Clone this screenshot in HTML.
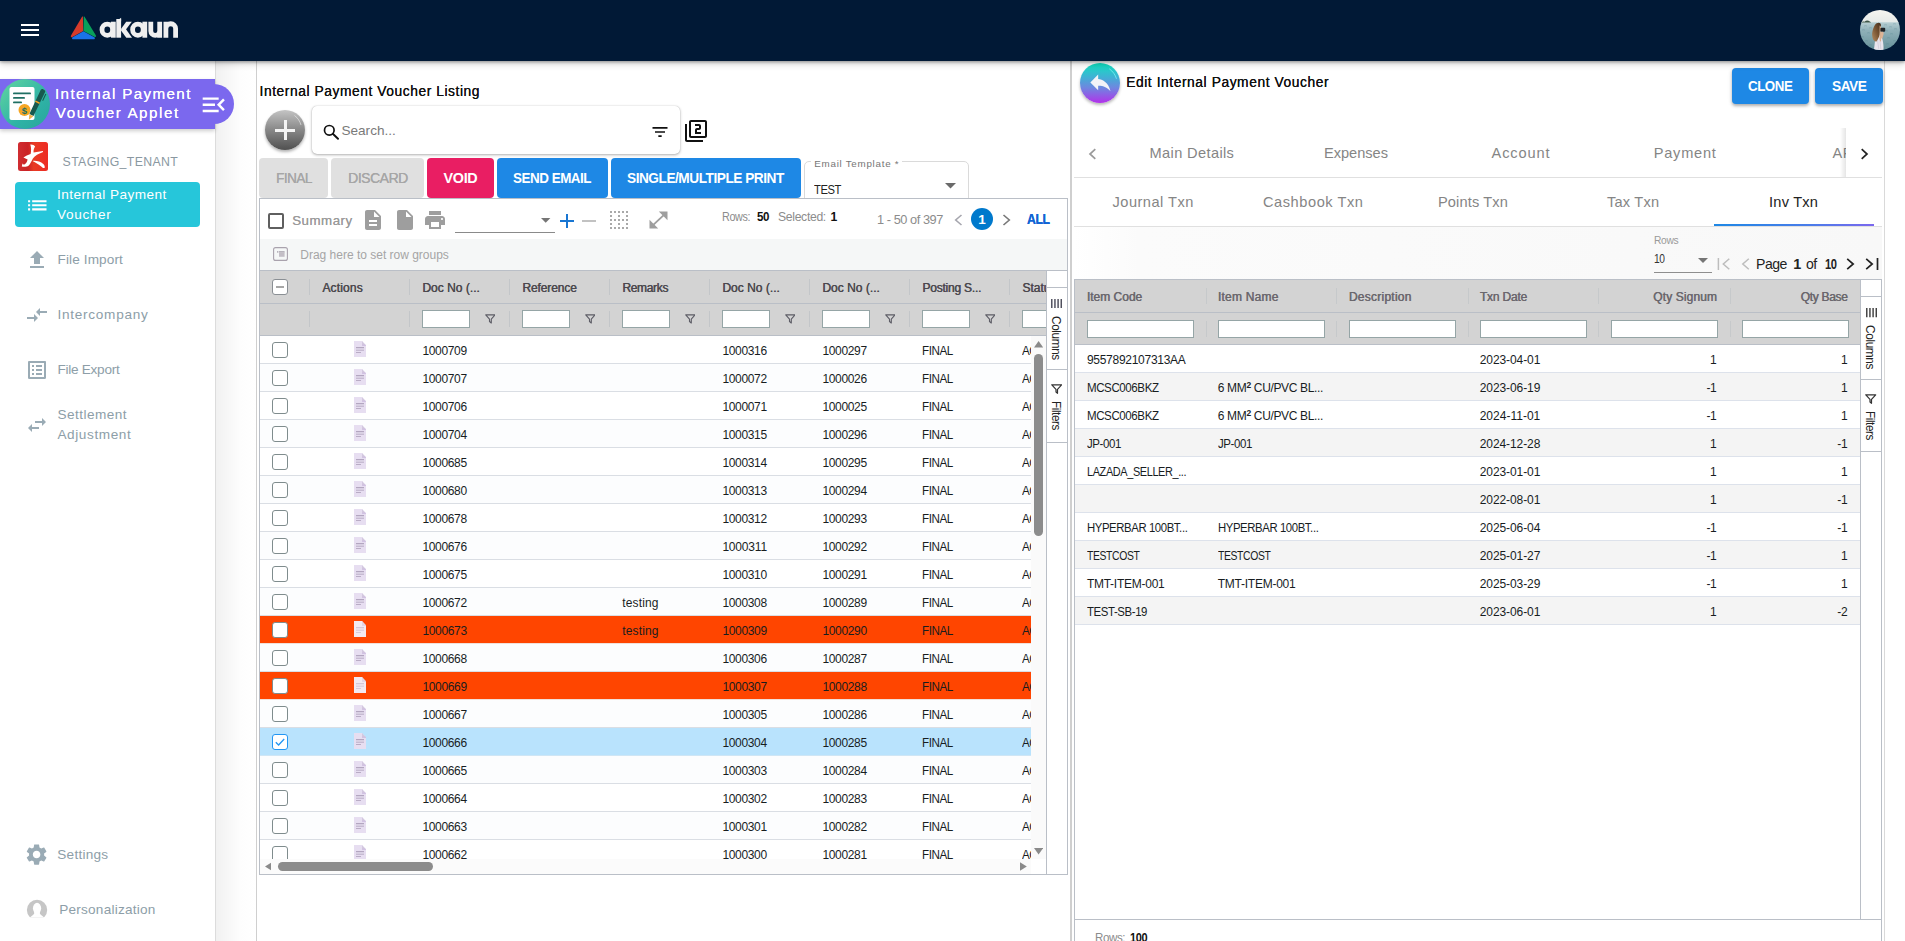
<!DOCTYPE html>
<html><head><meta charset="utf-8"><title>Internal Payment Voucher</title>
<style>
html,body{margin:0;padding:0}
body{width:1905px;height:941px;overflow:hidden;background:#fff;position:relative;font-family:"Liberation Sans",sans-serif;}
.b{position:absolute;display:block}
.t{position:absolute;white-space:nowrap;line-height:1;font-family:"Liberation Sans",sans-serif;}
</style></head>
<body>
<div class="b" style="left:216px;top:61px;width:40px;height:880px;background:linear-gradient(to right,#f1f1f1,#fdfdfd 60%,#fff);"></div>
<div class="b" style="left:215px;top:61px;width:1px;height:880px;background:#dcdcdc;"></div>
<div class="b" style="left:256px;top:61px;width:1px;height:880px;background:#cfcfcf;"></div>
<div class="b" style="left:0px;top:79px;width:215px;height:50px;background:#7b68ee;box-shadow:0 2px 4px rgba(0,0,0,.2);"></div>
<div class="b" style="left:194px;top:84px;width:40px;height:40px;background:#7b68ee;border-radius:50%;"></div>
<div class="b" style="left:0px;top:79px;width:215px;height:50px;background:#7b68ee;"></div>
<div class="b" style="left:0px;top:79px;width:50px;height:50px;background:linear-gradient(135deg,#63d6a0,#2fb3a6 60%,#27a59c);border-radius:50%;"></div>
<svg class="b" style="left:0px;top:79px;" width="50" height="50" viewBox="0 0 50 50">
      <rect x="9.5" y="8" width="25" height="33" rx="2" fill="#fff"/>
      <rect x="13" y="13.5" width="18" height="1.8" rx=".9" fill="#1f6f63"/>
      <rect x="13" y="18" width="12" height="1.8" rx=".9" fill="#1f6f63"/>
      <rect x="13" y="22.5" width="9" height="1.8" rx=".9" fill="#1f6f63"/>
      <circle cx="24.5" cy="31" r="6" fill="#f5a623"/>
      <text x="24.5" y="34.6" font-family="Liberation Sans" font-weight="700" font-size="9.5" text-anchor="middle" fill="#1f6f63">$</text>
      <path d="M40.800 10.800c.600-.800 1.500-.900 2.300-.500l1.200.600c.900.500 1.100 1.300.800 2.200L33.500 37l-4.100-2z" fill="#17594f"/>
      <path d="M45.300 14.800l1 .5-3.200 6.700-.9-.5z" fill="#17594f"/>
      <path d="M29.300 35.200l4.100 2-4.500 3.500z" fill="#f0b24a"/>
      <path d="M35.600 21.500l4.300 2.100-.6 1.300-4.300-2.100z" fill="#f5a623"/>
    </svg>
<div class="t" style="left:55.00px;top:86.00px;font-size:15.2px;color:#fff;letter-spacing:1.373px;text-shadow:0 0 .4px #fff;">Internal Payment</div>
<div class="t" style="left:55.80px;top:105.00px;font-size:15.2px;color:#fff;letter-spacing:1.562px;text-shadow:0 0 .4px #fff;">Voucher Applet</div>
<svg class="b" style="left:199px;top:89.5px;" width="29.5" height="29.5" viewBox="0 0 24 24"><path fill="#fff" d="M3 18h13v-2H3v2zm0-5h10v-2H3v2zm0-7v2h13V6H3zm18 9.59L17.42 12 21 8.41 19.59 7l-5 5 5 5L21 15.590z"/></svg>
<div class="b" style="left:18px;top:142.25px;width:30px;height:29px;background:linear-gradient(to right,#d02d31 0%,#ca2226 33%,#e73b25 52%,#ee2b23 100%);border-radius:2.500px;"></div>
<svg class="b" style="left:18px;top:142.25px;" width="30" height="29" viewBox="0 0 30 29"><path fill="#fff" d="M12.300 2.600C14 2.200 16.400 3.200 17.100 4.600C15.900 6.500 15.300 8.500 15.600 10.600L24.800 8.900C25.300 9.100 25.100 9.900 24.600 10.300C20.500 11.800 17 13.500 14.900 16.600C13.500 19 12.500 22 10.500 23.800C8.800 24.900 6 24.900 3.800 24.500L4.500 21.500L5.900 22.800C7.600 22.300 9 20.500 9.600 17.600L5.400 15.500C7.500 14 10 13.300 12.600 12.100C13.200 9.500 13.400 6 12.300 2.600Z"/>
      <path fill="#fff" d="M14.600 18.900C18 18.400 22.600 19.500 25.300 22C26.700 23.400 27.100 25 26.500 26.100L25 25.900C22.500 23.500 19 21 14.600 18.900Z"/></svg>
<div class="t" style="left:62.60px;top:156.00px;font-size:12.3px;color:#8a98a1;letter-spacing:0.365px;">STAGING_TENANT</div>
<div class="b" style="left:15px;top:182px;width:185px;height:45px;background:#26c6da;border-radius:4px;"></div>
<svg class="b" style="left:25px;top:193px;" width="24.6" height="24.6" viewBox="0 0 24 24"><path fill="#fff" d="M3 13h2v-2H3v2zm0 4h2v-2H3v2zm0-8h2V7H3v2zm4 4h14v-2H7v2zm0 4h14v-2H7v2zM7 7v2h14V7H7z"/></svg>
<div class="t" style="left:57.00px;top:188.00px;font-size:13.6px;color:#fff;letter-spacing:0.432px;">Internal Payment</div>
<div class="t" style="left:57.00px;top:208.00px;font-size:13.6px;color:#fff;letter-spacing:0.648px;">Voucher</div>
<svg class="b" style="left:25px;top:248px;" width="24" height="24" viewBox="0 0 24 24"><path fill="#9aabb5" d="M9 16h6v-6h4l-7-7-7 7h4zm-4 2h14v2H5z"/></svg>
<div class="t" style="left:57.50px;top:253.00px;font-size:13.6px;color:#8d9ea8;letter-spacing:0.117px;">File Import</div>
<svg class="b" style="left:25px;top:303.4px;" width="24" height="24" viewBox="0 0 24 24"><path fill="#9aabb5" d="M9.01 14H2v2h7.010v3L13 15l-3.990-4v3zm5.980-1v-3H22V8h-7.010V5L11 9l3.990 4z"/></svg>
<div class="t" style="left:57.40px;top:308.00px;font-size:13.6px;color:#8d9ea8;letter-spacing:0.735px;">Intercompany</div>
<svg class="b" style="left:25px;top:358px;" width="24" height="24" viewBox="0 0 24 24"><path fill="#9aabb5" d="M19 5v14H5V5h14m1.100-2H3.900c-.5 0-.9.4-.9.9v16.200c0 .4.400.9.900.9h16.200c.4 0 .9-.5.9-.9V3.900c0-.5-.5-.9-.9-.9zM11 7h6v2h-6V7zm0 4h6v2h-6v-2zm0 4h6v2h-6zM7 7h2v2H7zm0 4h2v2H7zm0 4h2v2H7z"/></svg>
<div class="t" style="left:57.40px;top:363.00px;font-size:13.6px;color:#8d9ea8;letter-spacing:-0.261px;">File Export</div>
<svg class="b" style="left:25px;top:413.3px;" width="24" height="24" viewBox="0 0 24 24"><path fill="#9aabb5" d="M6.990 11L3 15l3.990 4v-3H14v-2H6.990v-3zM21 9l-3.990-4v3H10v2h7.010v3L21 9z"/></svg>
<div class="t" style="left:57.40px;top:408.00px;font-size:13.6px;color:#8d9ea8;letter-spacing:0.466px;">Settlement</div>
<div class="t" style="left:57.40px;top:428.00px;font-size:13.6px;color:#8d9ea8;letter-spacing:0.600px;">Adjustment</div>
<svg class="b" style="left:24.4px;top:842.3px;" width="25.2" height="25.2" viewBox="0 0 24 24"><path fill="#9aabb5" d="M19.140 12.940c.040-.3.060-.61.060-.940 0-.320-.020-.640-.070-.940l2.030-1.580c.180-.140.230-.410.120-.610l-1.920-3.320c-.120-.220-.370-.290-.590-.220l-2.390.960c-.5-.380-1.030-.7-1.620-.940l-.360-2.540c-.040-.240-.240-.410-.480-.410h-3.840c-.240 0-.430.170-.470.410l-.360 2.540c-.590.240-1.130.570-1.620.940l-2.390-.960c-.220-.080-.470 0-.590.220L2.740 8.870c-.120.210-.080.470.120.610l2.030 1.580c-.050.3-.090.630-.090.940s.020.640.070.940l-2.030 1.580c-.180.140-.230.410-.120.610l1.920 3.320c.120.220.370.290.590.220l2.390-.960c.5.380 1.030.7 1.620.940l.360 2.540c.050.240.240.410.480.410h3.840c.240 0 .440-.170.470-.410l.360-2.540c.590-.240 1.130-.560 1.620-.940l2.390.960c.220.080.470 0 .590-.220l1.920-3.320c.120-.220.070-.470-.120-.610l-2.010-1.580zM12 15.600c-1.980 0-3.600-1.620-3.600-3.600s1.620-3.600 3.600-3.600 3.600 1.620 3.600 3.600-1.620 3.600-3.600 3.600z"/></svg>
<div class="t" style="left:57.30px;top:848.00px;font-size:13.6px;color:#8d9ea8;letter-spacing:0.229px;">Settings</div>
<svg class="b" style="left:26px;top:899px;" width="22" height="19" viewBox="0 0 22 19"><defs><clipPath id="pc"><rect x="0" y="0" width="22" height="18.300"/></clipPath></defs>
      <g clip-path="url(#pc)"><ellipse cx="11.050" cy="11" rx="10.150" ry="10.200" fill="#c6c6c6"/>
      <g fill="#fff"><ellipse cx="11.050" cy="9.300" rx="4.100" ry="5.500"/><path d="M8.300 12.500c.3 2.200-.6 3.300-2.300 4.300-1.200.7-2 1.600-2.300 3.200h14.700c-.3-1.600-1.100-2.500-2.300-3.200-1.700-1-2.600-2.100-2.300-4.300z"/></g></g></svg>
<div class="t" style="left:59.30px;top:903.00px;font-size:13.6px;color:#8d9ea8;letter-spacing:0.213px;">Personalization</div>
<div class="t" style="left:259.50px;top:85.00px;font-size:13.8px;color:#111;letter-spacing:0.566px;text-shadow:0 0 .3px #111;">Internal Payment Voucher Listing</div>
<div class="b" style="left:265px;top:110px;width:40px;height:40px;background:linear-gradient(to bottom,#c4c4c4,#8d8d8d 45%,#505050);border-radius:50%;box-shadow:0 2px 3px rgba(0,0,0,.3);"></div>
<div class="b" style="left:275px;top:128.5px;width:20px;height:3px;background:#f4f4f4;"></div>
<div class="b" style="left:283.5px;top:120px;width:3px;height:20px;background:#f4f4f4;"></div>
<svg class="b" style="left:265px;top:110px;" width="40" height="40" viewBox="0 0 40 40"><path d="M29.500 5.500c3.500 2.500 5.500 6 6.500 9.500" fill="none" stroke="rgba(255,255,255,.55)" stroke-width=".9"/></svg>
<div class="b" style="left:311.5px;top:105.5px;width:368.3px;height:48.5px;background:#fff;border-radius:5px;box-shadow:0 1px 3px rgba(0,0,0,.3),0 0 1px rgba(0,0,0,.25);"></div>
<svg class="b" style="left:322.5px;top:124px;" width="17" height="16" viewBox="0 0 17 16"><circle cx="6.300" cy="6.300" r="4.800" fill="none" stroke="#111" stroke-width="1.700"/><path d="M9.800 9.800l5.200 5" stroke="#111" stroke-width="1.900" stroke-linecap="round"/></svg>
<div class="t" style="left:341.40px;top:124.00px;font-size:13.6px;color:#7a7a7a;letter-spacing:0.013px;">Search...</div>
<svg class="b" style="left:650.4px;top:122px;" width="20" height="20" viewBox="0 0 24 24"><path fill="#111" d="M10 18h4v-2h-4v2zM3 6v2h18V6H3zm3 7h12v-2H6v2z"/></svg>
<svg class="b" style="left:683.8px;top:119.1px;" width="24" height="24" viewBox="0 0 24 24"><path fill="#111" d="M3 5H1v16c0 1.100.9 2 2 2h16v-2H3V5zm18-4H7c-1.100 0-2 .9-2 2v14c0 1.100.9 2 2 2h14c1.100 0 2-.9 2-2V3c0-1.100-.9-2-2-2zm0 16H7V3h14v14zm-4-4h-4v-2h2c1.100 0 2-.890 2-2V7c0-1.110-.9-2-2-2h-4v2h4v2h-2c-1.100 0-2 .890-2 2v4h6v-2z"/></svg>
<div class="b" style="left:259px;top:158px;width:69px;height:40px;background:#e0e0e0;border-radius:4px;"></div>
<div class="t" style="left:275.60px;top:171.00px;font-size:14.4px;color:#a6a6a6;letter-spacing:-0.504px;transform-origin:0 50%;transform:scaleX(0.9371);text-shadow:.3px 0 0 #a6a6a6;">FINAL</div>
<div class="b" style="left:331px;top:158px;width:93px;height:40px;background:#e0e0e0;border-radius:4px;"></div>
<div class="t" style="left:347.70px;top:171.00px;font-size:14.4px;color:#a6a6a6;letter-spacing:-0.504px;transform-origin:0 50%;transform:scaleX(0.9745);text-shadow:.3px 0 0 #a6a6a6;">DISCARD</div>
<div class="b" style="left:427px;top:158px;width:67px;height:40px;background:#e91e63;border-radius:4px;"></div>
<div class="t" style="left:443.50px;top:171.00px;font-size:14.4px;color:#fff;font-weight:700;letter-spacing:-0.312px;">VOID</div>
<div class="b" style="left:497px;top:158px;width:111px;height:40px;background:#1e88e5;border-radius:4px;"></div>
<div class="t" style="left:513.10px;top:171.00px;font-size:14.4px;color:#fff;font-weight:700;letter-spacing:-0.504px;transform-origin:0 50%;transform:scaleX(0.9323);">SEND EMAIL</div>
<div class="b" style="left:611px;top:158px;width:190px;height:40px;background:#1e88e5;border-radius:4px;"></div>
<div class="t" style="left:626.80px;top:171.00px;font-size:14.4px;color:#fff;font-weight:700;letter-spacing:-0.504px;transform-origin:0 50%;transform:scaleX(0.9505);">SINGLE/MULTIPLE PRINT</div>
<div class="b" style="left:804px;top:161px;width:165px;height:45px;background:#fff;border:1px solid #dadada;border-radius:5px;box-sizing:border-box;"></div>
<div class="b" style="left:811px;top:160px;width:91px;height:4px;background:#fff;"></div>
<div class="t" style="left:814.30px;top:159.00px;font-size:9.8px;color:#767676;letter-spacing:0.733px;">Email Template *</div>
<div class="t" style="left:814.30px;top:183.00px;font-size:13px;color:#222;letter-spacing:-0.455px;transform-origin:0 50%;transform:scaleX(0.8617);">TEST</div>
<svg class="b" style="left:944.5px;top:183.3px;" width="11" height="5.5" viewBox="0 0 10 5"><path d="M0 0h10L5 5z" fill="#6a6a6a"/></svg>
<div class="b" style="left:259px;top:198px;width:809px;height:677px;background:#fff;border:1px solid #babfc7;box-sizing:border-box;"></div>
<div class="b" style="left:268px;top:213px;width:16px;height:16px;background:#fff;border:2px solid #5f5f5f;border-radius:2px;box-sizing:border-box;"></div>
<div class="t" style="left:292.20px;top:214.00px;font-size:13.3px;color:#9b9b9b;letter-spacing:0.513px;text-shadow:0 0 .4px #9b9b9b;">Summary</div>
<svg class="b" style="left:360.8px;top:208.2px;" width="24" height="24" viewBox="0 0 24 24"><path fill="#9e9e9e" d="M14 2H6c-1.100 0-1.990.9-1.990 2L4 20c0 1.100.890 2 1.990 2H18c1.100 0 2-.9 2-2V8l-6-6zm2 16H8v-2h8v2zm0-4H8v-2h8v2zm-3-5V3.500L18.500 9H13z"/></svg>
<svg class="b" style="left:392.7px;top:208.2px;" width="24" height="24" viewBox="0 0 24 24"><path fill="#9e9e9e" d="M6 2c-1.100 0-1.990.9-1.990 2L4 20c0 1.100.890 2 1.990 2H18c1.100 0 2-.9 2-2V8l-6-6H6zm7 7V3.500L18.500 9H13z"/></svg>
<svg class="b" style="left:422.8px;top:208px;" width="24" height="24" viewBox="0 0 24 24"><path fill="#9e9e9e" d="M19 8H5c-1.660 0-3 1.340-3 3v6h4v4h12v-4h4v-6c0-1.660-1.340-3-3-3zm-3 11H8v-5h8v5zm3-7c-.550 0-1-.450-1-1s.450-1 1-1 1 .450 1 1-.450 1-1 1zm-1-9H6v4h12V3z"/></svg>
<div class="b" style="left:455px;top:232px;width:100px;height:1px;background:#8a8a8a;"></div>
<svg class="b" style="left:541.3px;top:218px;" width="9.4" height="4.8" viewBox="0 0 10 5"><path d="M0 0h10L5 5z" fill="#757575"/></svg>
<div class="b" style="left:560px;top:219.9px;width:14px;height:2px;background:#1976d2;"></div>
<div class="b" style="left:566px;top:214px;width:2px;height:13.6px;background:#1976d2;"></div>
<div class="b" style="left:582px;top:219.9px;width:14px;height:2px;background:#c2c2c2;"></div>
<svg class="b" style="left:606.7px;top:208px;" width="24" height="24" viewBox="0 0 24 24"><g fill="#a9a9a9"><rect x="3" y="3" width="2" height="2"/><rect x="3" y="7" width="2" height="2"/><rect x="3" y="11" width="2" height="2"/><rect x="3" y="15" width="2" height="2"/><rect x="3" y="19" width="2" height="2"/><rect x="7" y="3" width="2" height="2"/><rect x="7" y="11" width="2" height="2"/><rect x="7" y="19" width="2" height="2"/><rect x="11" y="3" width="2" height="2"/><rect x="11" y="7" width="2" height="2"/><rect x="11" y="11" width="2" height="2"/><rect x="11" y="15" width="2" height="2"/><rect x="11" y="19" width="2" height="2"/><rect x="15" y="3" width="2" height="2"/><rect x="15" y="11" width="2" height="2"/><rect x="15" y="19" width="2" height="2"/><rect x="19" y="3" width="2" height="2"/><rect x="19" y="7" width="2" height="2"/><rect x="19" y="11" width="2" height="2"/><rect x="19" y="15" width="2" height="2"/><rect x="19" y="19" width="2" height="2"/></g></svg>
<svg class="b" style="left:649px;top:211px;" width="19" height="18" viewBox="0 0 19 18"><path d="M3.500 14.700L15.500 3.300" stroke="#9e9e9e" stroke-width="1.800"/><path d="M9.800 .5h8.700v8.700z M.5 8.800v8.700h8.700z" fill="#9e9e9e"/></svg>
<div class="t" style="left:721.80px;top:211.00px;font-size:12.2px;color:#8c8c8c;letter-spacing:-0.427px;transform-origin:0 50%;transform:scaleX(0.8849);">Rows:</div>
<div class="t" style="left:757.00px;top:211.00px;font-size:12.2px;color:#111;font-weight:700;letter-spacing:-0.427px;transform-origin:0 50%;transform:scaleX(0.9455);">50</div>
<div class="t" style="left:778.00px;top:211.00px;font-size:12.2px;color:#8c8c8c;letter-spacing:-0.322px;">Selected:</div>
<div class="t" style="left:830.40px;top:211.00px;font-size:12.2px;color:#111;font-weight:700;">1</div>
<div class="t" style="left:877.30px;top:214.00px;font-size:12.8px;color:#8c8c8c;letter-spacing:-0.448px;transform-origin:0 50%;transform:scaleX(0.9980);">1 - 50 of 397</div>
<svg class="b" style="left:953.6px;top:214px;" width="9" height="12" viewBox="0 0 9 12"><path d="M7.500 1L1.700 6l5.800 5" fill="none" stroke="#a6a6ae" stroke-width="1.600"/></svg>
<div class="b" style="left:971px;top:208px;width:22px;height:22px;background:#0079cc;border-radius:50%;"></div>
<div class="t" style="left:978.22px;top:213.00px;font-size:13.5px;color:#fff;font-weight:700;">1</div>
<svg class="b" style="left:1002px;top:214px;" width="9" height="12" viewBox="0 0 9 12"><path d="M1.500 1l5.800 5-5.800 5" fill="none" stroke="#777" stroke-width="1.600"/></svg>
<div class="t" style="left:1027.40px;top:212.00px;font-size:14.2px;color:#1264d4;font-weight:700;letter-spacing:-0.497px;transform-origin:0 50%;transform:scaleX(0.8624);text-shadow:0 0 .4px #1264d4;">ALL</div>
<div class="b" style="left:260px;top:239px;width:807px;height:31px;background:#f5f7f7;border-bottom:1px solid #babfc7;"></div>
<svg class="b" style="left:272.5px;top:247px;" width="15" height="14" viewBox="0 0 15 14"><rect x=".6" y=".6" width="13.800" height="12.800" rx="2" fill="none" stroke="#a9a2ad" stroke-width="1.100"/><rect x="4" y="4.200" width="1.400" height="1.400" fill="#a9a2ad"/><rect x="6" y="4.200" width="5.600" height="1.400" fill="#a9a2ad"/><rect x="6" y="5.500" width="5.600" height="4.300" fill="#c3bec6"/></svg>
<div class="t" style="left:300.30px;top:249.00px;font-size:12px;color:#a5a5a5;letter-spacing:-0.007px;">Drag here to set row groups</div>
<div class="b" style="left:260px;top:271px;width:787px;height:32px;background:#d3d3d3;border-bottom:1px solid #babfc7;"></div>
<div class="b" style="left:260px;top:304px;width:787px;height:31px;background:#d3d3d3;border-bottom:1px solid #babfc7;"></div>
<div class="b" style="left:272px;top:279px;width:16px;height:16px;background:#fff;border:1px solid #8a8f94;border-radius:3px;box-sizing:border-box;"><div class="b" style="left:3px;top:6px;width:8px;height:1.600px;background:#a6a6a6"></div></div>
<div class="b" style="left:309px;top:279px;width:1px;height:16px;background:#c3c6c9;"></div>
<div class="b" style="left:309px;top:311px;width:1px;height:16px;background:#c3c6c9;"></div>
<div class="t" style="left:322.20px;top:282.00px;font-size:12px;color:#4b484e;letter-spacing:0.157px;text-shadow:.45px 0 0 #4b484e;">Actions</div>
<div class="b" style="left:409px;top:279px;width:1px;height:16px;background:#c3c6c9;"></div>
<div class="b" style="left:409px;top:311px;width:1px;height:16px;background:#c3c6c9;"></div>
<div class="t" style="left:422.20px;top:282.00px;font-size:12px;color:#4b484e;letter-spacing:0.014px;text-shadow:.45px 0 0 #4b484e;">Doc No (...</div>
<div class="b" style="left:422px;top:310px;width:48px;height:18px;background:#fff;border:1px solid #95a5a6;box-sizing:border-box;"></div>
<svg class="b" style="left:484.7px;top:313.6px;" width="10.8" height="10" viewBox="0 0 12 11"><path d="M.8 .9h10.400L7 5.600v4.300L5 8.300V5.600z" fill="none" stroke="#5d5d66" stroke-width="1.250" stroke-linejoin="round"/></svg>
<div class="b" style="left:509px;top:279px;width:1px;height:16px;background:#c3c6c9;"></div>
<div class="b" style="left:509px;top:311px;width:1px;height:16px;background:#c3c6c9;"></div>
<div class="t" style="left:522.20px;top:282.00px;font-size:12px;color:#4b484e;letter-spacing:-0.103px;text-shadow:.45px 0 0 #4b484e;">Reference</div>
<div class="b" style="left:522px;top:310px;width:48px;height:18px;background:#fff;border:1px solid #95a5a6;box-sizing:border-box;"></div>
<svg class="b" style="left:584.7px;top:313.6px;" width="10.8" height="10" viewBox="0 0 12 11"><path d="M.8 .9h10.400L7 5.600v4.300L5 8.300V5.600z" fill="none" stroke="#5d5d66" stroke-width="1.250" stroke-linejoin="round"/></svg>
<div class="b" style="left:609px;top:279px;width:1px;height:16px;background:#c3c6c9;"></div>
<div class="b" style="left:609px;top:311px;width:1px;height:16px;background:#c3c6c9;"></div>
<div class="t" style="left:622.20px;top:282.00px;font-size:12px;color:#4b484e;letter-spacing:-0.333px;text-shadow:.45px 0 0 #4b484e;">Remarks</div>
<div class="b" style="left:622px;top:310px;width:48px;height:18px;background:#fff;border:1px solid #95a5a6;box-sizing:border-box;"></div>
<svg class="b" style="left:684.7px;top:313.6px;" width="10.8" height="10" viewBox="0 0 12 11"><path d="M.8 .9h10.400L7 5.600v4.300L5 8.300V5.600z" fill="none" stroke="#5d5d66" stroke-width="1.250" stroke-linejoin="round"/></svg>
<div class="b" style="left:709px;top:279px;width:1px;height:16px;background:#c3c6c9;"></div>
<div class="b" style="left:709px;top:311px;width:1px;height:16px;background:#c3c6c9;"></div>
<div class="t" style="left:722.20px;top:282.00px;font-size:12px;color:#4b484e;letter-spacing:0.014px;text-shadow:.45px 0 0 #4b484e;">Doc No (...</div>
<div class="b" style="left:722px;top:310px;width:48px;height:18px;background:#fff;border:1px solid #95a5a6;box-sizing:border-box;"></div>
<svg class="b" style="left:784.7px;top:313.6px;" width="10.8" height="10" viewBox="0 0 12 11"><path d="M.8 .9h10.400L7 5.600v4.300L5 8.300V5.600z" fill="none" stroke="#5d5d66" stroke-width="1.250" stroke-linejoin="round"/></svg>
<div class="b" style="left:809px;top:279px;width:1px;height:16px;background:#c3c6c9;"></div>
<div class="b" style="left:809px;top:311px;width:1px;height:16px;background:#c3c6c9;"></div>
<div class="t" style="left:822.20px;top:282.00px;font-size:12px;color:#4b484e;letter-spacing:0.014px;text-shadow:.45px 0 0 #4b484e;">Doc No (...</div>
<div class="b" style="left:822px;top:310px;width:48px;height:18px;background:#fff;border:1px solid #95a5a6;box-sizing:border-box;"></div>
<svg class="b" style="left:884.7px;top:313.6px;" width="10.8" height="10" viewBox="0 0 12 11"><path d="M.8 .9h10.400L7 5.600v4.300L5 8.300V5.600z" fill="none" stroke="#5d5d66" stroke-width="1.250" stroke-linejoin="round"/></svg>
<div class="b" style="left:909px;top:279px;width:1px;height:16px;background:#c3c6c9;"></div>
<div class="b" style="left:909px;top:311px;width:1px;height:16px;background:#c3c6c9;"></div>
<div class="t" style="left:922.20px;top:282.00px;font-size:12px;color:#4b484e;letter-spacing:-0.211px;text-shadow:.45px 0 0 #4b484e;">Posting S...</div>
<div class="b" style="left:922px;top:310px;width:48px;height:18px;background:#fff;border:1px solid #95a5a6;box-sizing:border-box;"></div>
<svg class="b" style="left:984.7px;top:313.6px;" width="10.8" height="10" viewBox="0 0 12 11"><path d="M.8 .9h10.400L7 5.600v4.300L5 8.300V5.600z" fill="none" stroke="#5d5d66" stroke-width="1.250" stroke-linejoin="round"/></svg>
<div class="b" style="left:1009px;top:279px;width:1px;height:16px;background:#c3c6c9;"></div>
<div class="b" style="left:1009px;top:311px;width:1px;height:16px;background:#c3c6c9;"></div>
<div class="t" style="left:1022.20px;top:282.00px;font-size:12px;color:#4b484e;letter-spacing:0.008px;text-shadow:.45px 0 0 #4b484e;overflow:hidden;width:24px;">Status</div>
<div class="b" style="left:1022px;top:310px;width:30px;height:18px;background:#fff;border:1px solid #95a5a6;box-sizing:border-box;border-right:none;"></div>
<div class="b" style="left:260px;top:336px;width:771px;height:523px;background:#fff;overflow:hidden;"><div class="b" style="left:0px;top:0px;width:771px;height:28px;background:#fff;border-bottom:1px solid #dadee4;box-sizing:border-box;"></div><div class="b" style="left:12px;top:6px;width:16px;height:16px;background:#fff;border:1px solid #7f8c8d;border-radius:3px;box-sizing:border-box;"></div><svg class="b" style="left:94px;top:5px;" width="12" height="16" viewBox="0 0 12 16"><path d="M0 0h8l4 4.500v11.500H0z" fill="#e7def1"/><path d="M8 0v4.500h4z" fill="#d3c8df"/><path d="M8 4.300h4" stroke="#c9b6e0" stroke-width=".7"/><rect x="2" y="6.900" width="8" height="2.200" fill="#d9d0e4"/><path d="M2 6.500h8" stroke="#b3a6c0" stroke-width="1"/><path d="M2 9.400h8" stroke="#c3b7cf" stroke-width="1"/><path d="M2 11.500h5" stroke="#b3a6c0" stroke-width=".9"/></svg><div class="t" style="left:162.40px;top:9.00px;font-size:12px;color:#181d1f;letter-spacing:-0.330px;">1000709</div><div class="t" style="left:462.40px;top:9.00px;font-size:12px;color:#181d1f;letter-spacing:-0.330px;">1000316</div><div class="t" style="left:562.40px;top:9.00px;font-size:12px;color:#181d1f;letter-spacing:-0.330px;">1000297</div><div class="t" style="left:662.30px;top:9.00px;font-size:12px;color:#181d1f;letter-spacing:-0.420px;transform-origin:0 50%;transform:scaleX(0.9696);">FINAL</div><div class="t" style="left:762.20px;top:9.00px;font-size:12px;color:#181d1f;letter-spacing:-0.420px;transform-origin:0 50%;transform:scaleX(0.9704);">ACTIVE</div><div class="b" style="left:0px;top:28px;width:771px;height:28px;background:#fcfdfe;border-bottom:1px solid #dadee4;box-sizing:border-box;"></div><div class="b" style="left:12px;top:34px;width:16px;height:16px;background:#fff;border:1px solid #7f8c8d;border-radius:3px;box-sizing:border-box;"></div><svg class="b" style="left:94px;top:33px;" width="12" height="16" viewBox="0 0 12 16"><path d="M0 0h8l4 4.500v11.500H0z" fill="#e7def1"/><path d="M8 0v4.500h4z" fill="#d3c8df"/><path d="M8 4.300h4" stroke="#c9b6e0" stroke-width=".7"/><rect x="2" y="6.900" width="8" height="2.200" fill="#d9d0e4"/><path d="M2 6.500h8" stroke="#b3a6c0" stroke-width="1"/><path d="M2 9.400h8" stroke="#c3b7cf" stroke-width="1"/><path d="M2 11.500h5" stroke="#b3a6c0" stroke-width=".9"/></svg><div class="t" style="left:162.40px;top:37.00px;font-size:12px;color:#181d1f;letter-spacing:-0.330px;">1000707</div><div class="t" style="left:462.40px;top:37.00px;font-size:12px;color:#181d1f;letter-spacing:-0.330px;">1000072</div><div class="t" style="left:562.40px;top:37.00px;font-size:12px;color:#181d1f;letter-spacing:-0.330px;">1000026</div><div class="t" style="left:662.30px;top:37.00px;font-size:12px;color:#181d1f;letter-spacing:-0.420px;transform-origin:0 50%;transform:scaleX(0.9696);">FINAL</div><div class="t" style="left:762.20px;top:37.00px;font-size:12px;color:#181d1f;letter-spacing:-0.420px;transform-origin:0 50%;transform:scaleX(0.9704);">ACTIVE</div><div class="b" style="left:0px;top:56px;width:771px;height:28px;background:#fff;border-bottom:1px solid #dadee4;box-sizing:border-box;"></div><div class="b" style="left:12px;top:62px;width:16px;height:16px;background:#fff;border:1px solid #7f8c8d;border-radius:3px;box-sizing:border-box;"></div><svg class="b" style="left:94px;top:61px;" width="12" height="16" viewBox="0 0 12 16"><path d="M0 0h8l4 4.500v11.500H0z" fill="#e7def1"/><path d="M8 0v4.500h4z" fill="#d3c8df"/><path d="M8 4.300h4" stroke="#c9b6e0" stroke-width=".7"/><rect x="2" y="6.900" width="8" height="2.200" fill="#d9d0e4"/><path d="M2 6.500h8" stroke="#b3a6c0" stroke-width="1"/><path d="M2 9.400h8" stroke="#c3b7cf" stroke-width="1"/><path d="M2 11.500h5" stroke="#b3a6c0" stroke-width=".9"/></svg><div class="t" style="left:162.40px;top:65.00px;font-size:12px;color:#181d1f;letter-spacing:-0.330px;">1000706</div><div class="t" style="left:462.40px;top:65.00px;font-size:12px;color:#181d1f;letter-spacing:-0.330px;">1000071</div><div class="t" style="left:562.40px;top:65.00px;font-size:12px;color:#181d1f;letter-spacing:-0.330px;">1000025</div><div class="t" style="left:662.30px;top:65.00px;font-size:12px;color:#181d1f;letter-spacing:-0.420px;transform-origin:0 50%;transform:scaleX(0.9696);">FINAL</div><div class="t" style="left:762.20px;top:65.00px;font-size:12px;color:#181d1f;letter-spacing:-0.420px;transform-origin:0 50%;transform:scaleX(0.9704);">ACTIVE</div><div class="b" style="left:0px;top:84px;width:771px;height:28px;background:#fcfdfe;border-bottom:1px solid #dadee4;box-sizing:border-box;"></div><div class="b" style="left:12px;top:90px;width:16px;height:16px;background:#fff;border:1px solid #7f8c8d;border-radius:3px;box-sizing:border-box;"></div><svg class="b" style="left:94px;top:89px;" width="12" height="16" viewBox="0 0 12 16"><path d="M0 0h8l4 4.500v11.500H0z" fill="#e7def1"/><path d="M8 0v4.500h4z" fill="#d3c8df"/><path d="M8 4.300h4" stroke="#c9b6e0" stroke-width=".7"/><rect x="2" y="6.900" width="8" height="2.200" fill="#d9d0e4"/><path d="M2 6.500h8" stroke="#b3a6c0" stroke-width="1"/><path d="M2 9.400h8" stroke="#c3b7cf" stroke-width="1"/><path d="M2 11.500h5" stroke="#b3a6c0" stroke-width=".9"/></svg><div class="t" style="left:162.40px;top:93.00px;font-size:12px;color:#181d1f;letter-spacing:-0.330px;">1000704</div><div class="t" style="left:462.40px;top:93.00px;font-size:12px;color:#181d1f;letter-spacing:-0.330px;">1000315</div><div class="t" style="left:562.40px;top:93.00px;font-size:12px;color:#181d1f;letter-spacing:-0.330px;">1000296</div><div class="t" style="left:662.30px;top:93.00px;font-size:12px;color:#181d1f;letter-spacing:-0.420px;transform-origin:0 50%;transform:scaleX(0.9696);">FINAL</div><div class="t" style="left:762.20px;top:93.00px;font-size:12px;color:#181d1f;letter-spacing:-0.420px;transform-origin:0 50%;transform:scaleX(0.9704);">ACTIVE</div><div class="b" style="left:0px;top:112px;width:771px;height:28px;background:#fff;border-bottom:1px solid #dadee4;box-sizing:border-box;"></div><div class="b" style="left:12px;top:118px;width:16px;height:16px;background:#fff;border:1px solid #7f8c8d;border-radius:3px;box-sizing:border-box;"></div><svg class="b" style="left:94px;top:117px;" width="12" height="16" viewBox="0 0 12 16"><path d="M0 0h8l4 4.500v11.500H0z" fill="#e7def1"/><path d="M8 0v4.500h4z" fill="#d3c8df"/><path d="M8 4.300h4" stroke="#c9b6e0" stroke-width=".7"/><rect x="2" y="6.900" width="8" height="2.200" fill="#d9d0e4"/><path d="M2 6.500h8" stroke="#b3a6c0" stroke-width="1"/><path d="M2 9.400h8" stroke="#c3b7cf" stroke-width="1"/><path d="M2 11.500h5" stroke="#b3a6c0" stroke-width=".9"/></svg><div class="t" style="left:162.40px;top:121.00px;font-size:12px;color:#181d1f;letter-spacing:-0.330px;">1000685</div><div class="t" style="left:462.40px;top:121.00px;font-size:12px;color:#181d1f;letter-spacing:-0.330px;">1000314</div><div class="t" style="left:562.40px;top:121.00px;font-size:12px;color:#181d1f;letter-spacing:-0.330px;">1000295</div><div class="t" style="left:662.30px;top:121.00px;font-size:12px;color:#181d1f;letter-spacing:-0.420px;transform-origin:0 50%;transform:scaleX(0.9696);">FINAL</div><div class="t" style="left:762.20px;top:121.00px;font-size:12px;color:#181d1f;letter-spacing:-0.420px;transform-origin:0 50%;transform:scaleX(0.9704);">ACTIVE</div><div class="b" style="left:0px;top:140px;width:771px;height:28px;background:#fcfdfe;border-bottom:1px solid #dadee4;box-sizing:border-box;"></div><div class="b" style="left:12px;top:146px;width:16px;height:16px;background:#fff;border:1px solid #7f8c8d;border-radius:3px;box-sizing:border-box;"></div><svg class="b" style="left:94px;top:145px;" width="12" height="16" viewBox="0 0 12 16"><path d="M0 0h8l4 4.500v11.500H0z" fill="#e7def1"/><path d="M8 0v4.500h4z" fill="#d3c8df"/><path d="M8 4.300h4" stroke="#c9b6e0" stroke-width=".7"/><rect x="2" y="6.900" width="8" height="2.200" fill="#d9d0e4"/><path d="M2 6.500h8" stroke="#b3a6c0" stroke-width="1"/><path d="M2 9.400h8" stroke="#c3b7cf" stroke-width="1"/><path d="M2 11.500h5" stroke="#b3a6c0" stroke-width=".9"/></svg><div class="t" style="left:162.40px;top:149.00px;font-size:12px;color:#181d1f;letter-spacing:-0.330px;">1000680</div><div class="t" style="left:462.40px;top:149.00px;font-size:12px;color:#181d1f;letter-spacing:-0.330px;">1000313</div><div class="t" style="left:562.40px;top:149.00px;font-size:12px;color:#181d1f;letter-spacing:-0.330px;">1000294</div><div class="t" style="left:662.30px;top:149.00px;font-size:12px;color:#181d1f;letter-spacing:-0.420px;transform-origin:0 50%;transform:scaleX(0.9696);">FINAL</div><div class="t" style="left:762.20px;top:149.00px;font-size:12px;color:#181d1f;letter-spacing:-0.420px;transform-origin:0 50%;transform:scaleX(0.9704);">ACTIVE</div><div class="b" style="left:0px;top:168px;width:771px;height:28px;background:#fff;border-bottom:1px solid #dadee4;box-sizing:border-box;"></div><div class="b" style="left:12px;top:174px;width:16px;height:16px;background:#fff;border:1px solid #7f8c8d;border-radius:3px;box-sizing:border-box;"></div><svg class="b" style="left:94px;top:173px;" width="12" height="16" viewBox="0 0 12 16"><path d="M0 0h8l4 4.500v11.500H0z" fill="#e7def1"/><path d="M8 0v4.500h4z" fill="#d3c8df"/><path d="M8 4.300h4" stroke="#c9b6e0" stroke-width=".7"/><rect x="2" y="6.900" width="8" height="2.200" fill="#d9d0e4"/><path d="M2 6.500h8" stroke="#b3a6c0" stroke-width="1"/><path d="M2 9.400h8" stroke="#c3b7cf" stroke-width="1"/><path d="M2 11.500h5" stroke="#b3a6c0" stroke-width=".9"/></svg><div class="t" style="left:162.40px;top:177.00px;font-size:12px;color:#181d1f;letter-spacing:-0.330px;">1000678</div><div class="t" style="left:462.40px;top:177.00px;font-size:12px;color:#181d1f;letter-spacing:-0.330px;">1000312</div><div class="t" style="left:562.40px;top:177.00px;font-size:12px;color:#181d1f;letter-spacing:-0.330px;">1000293</div><div class="t" style="left:662.30px;top:177.00px;font-size:12px;color:#181d1f;letter-spacing:-0.420px;transform-origin:0 50%;transform:scaleX(0.9696);">FINAL</div><div class="t" style="left:762.20px;top:177.00px;font-size:12px;color:#181d1f;letter-spacing:-0.420px;transform-origin:0 50%;transform:scaleX(0.9704);">ACTIVE</div><div class="b" style="left:0px;top:196px;width:771px;height:28px;background:#fcfdfe;border-bottom:1px solid #dadee4;box-sizing:border-box;"></div><div class="b" style="left:12px;top:202px;width:16px;height:16px;background:#fff;border:1px solid #7f8c8d;border-radius:3px;box-sizing:border-box;"></div><svg class="b" style="left:94px;top:201px;" width="12" height="16" viewBox="0 0 12 16"><path d="M0 0h8l4 4.500v11.500H0z" fill="#e7def1"/><path d="M8 0v4.500h4z" fill="#d3c8df"/><path d="M8 4.300h4" stroke="#c9b6e0" stroke-width=".7"/><rect x="2" y="6.900" width="8" height="2.200" fill="#d9d0e4"/><path d="M2 6.500h8" stroke="#b3a6c0" stroke-width="1"/><path d="M2 9.400h8" stroke="#c3b7cf" stroke-width="1"/><path d="M2 11.500h5" stroke="#b3a6c0" stroke-width=".9"/></svg><div class="t" style="left:162.40px;top:205.00px;font-size:12px;color:#181d1f;letter-spacing:-0.330px;">1000676</div><div class="t" style="left:462.40px;top:205.00px;font-size:12px;color:#181d1f;letter-spacing:-0.190px;">1000311</div><div class="t" style="left:562.40px;top:205.00px;font-size:12px;color:#181d1f;letter-spacing:-0.330px;">1000292</div><div class="t" style="left:662.30px;top:205.00px;font-size:12px;color:#181d1f;letter-spacing:-0.420px;transform-origin:0 50%;transform:scaleX(0.9696);">FINAL</div><div class="t" style="left:762.20px;top:205.00px;font-size:12px;color:#181d1f;letter-spacing:-0.420px;transform-origin:0 50%;transform:scaleX(0.9704);">ACTIVE</div><div class="b" style="left:0px;top:224px;width:771px;height:28px;background:#fff;border-bottom:1px solid #dadee4;box-sizing:border-box;"></div><div class="b" style="left:12px;top:230px;width:16px;height:16px;background:#fff;border:1px solid #7f8c8d;border-radius:3px;box-sizing:border-box;"></div><svg class="b" style="left:94px;top:229px;" width="12" height="16" viewBox="0 0 12 16"><path d="M0 0h8l4 4.500v11.500H0z" fill="#e7def1"/><path d="M8 0v4.500h4z" fill="#d3c8df"/><path d="M8 4.300h4" stroke="#c9b6e0" stroke-width=".7"/><rect x="2" y="6.900" width="8" height="2.200" fill="#d9d0e4"/><path d="M2 6.500h8" stroke="#b3a6c0" stroke-width="1"/><path d="M2 9.400h8" stroke="#c3b7cf" stroke-width="1"/><path d="M2 11.500h5" stroke="#b3a6c0" stroke-width=".9"/></svg><div class="t" style="left:162.40px;top:233.00px;font-size:12px;color:#181d1f;letter-spacing:-0.330px;">1000675</div><div class="t" style="left:462.40px;top:233.00px;font-size:12px;color:#181d1f;letter-spacing:-0.330px;">1000310</div><div class="t" style="left:562.40px;top:233.00px;font-size:12px;color:#181d1f;letter-spacing:-0.330px;">1000291</div><div class="t" style="left:662.30px;top:233.00px;font-size:12px;color:#181d1f;letter-spacing:-0.420px;transform-origin:0 50%;transform:scaleX(0.9696);">FINAL</div><div class="t" style="left:762.20px;top:233.00px;font-size:12px;color:#181d1f;letter-spacing:-0.420px;transform-origin:0 50%;transform:scaleX(0.9704);">ACTIVE</div><div class="b" style="left:0px;top:252px;width:771px;height:28px;background:#fcfdfe;border-bottom:1px solid #dadee4;box-sizing:border-box;"></div><div class="b" style="left:12px;top:258px;width:16px;height:16px;background:#fff;border:1px solid #7f8c8d;border-radius:3px;box-sizing:border-box;"></div><svg class="b" style="left:94px;top:257px;" width="12" height="16" viewBox="0 0 12 16"><path d="M0 0h8l4 4.500v11.500H0z" fill="#e7def1"/><path d="M8 0v4.500h4z" fill="#d3c8df"/><path d="M8 4.300h4" stroke="#c9b6e0" stroke-width=".7"/><rect x="2" y="6.900" width="8" height="2.200" fill="#d9d0e4"/><path d="M2 6.500h8" stroke="#b3a6c0" stroke-width="1"/><path d="M2 9.400h8" stroke="#c3b7cf" stroke-width="1"/><path d="M2 11.500h5" stroke="#b3a6c0" stroke-width=".9"/></svg><div class="t" style="left:162.40px;top:261.00px;font-size:12px;color:#181d1f;letter-spacing:-0.330px;">1000672</div><div class="t" style="left:362.30px;top:261.00px;font-size:12px;color:#181d1f;letter-spacing:0.133px;">testing</div><div class="t" style="left:462.40px;top:261.00px;font-size:12px;color:#181d1f;letter-spacing:-0.330px;">1000308</div><div class="t" style="left:562.40px;top:261.00px;font-size:12px;color:#181d1f;letter-spacing:-0.330px;">1000289</div><div class="t" style="left:662.30px;top:261.00px;font-size:12px;color:#181d1f;letter-spacing:-0.420px;transform-origin:0 50%;transform:scaleX(0.9696);">FINAL</div><div class="t" style="left:762.20px;top:261.00px;font-size:12px;color:#181d1f;letter-spacing:-0.420px;transform-origin:0 50%;transform:scaleX(0.9704);">ACTIVE</div><div class="b" style="left:0px;top:280px;width:771px;height:28px;background:#ff4500;border-bottom:1px solid #f1e0da;box-sizing:border-box;"></div><div class="b" style="left:12px;top:286px;width:16px;height:16px;background:#fff;border:1px solid #7f8c8d;border-radius:3px;box-sizing:border-box;"></div><svg class="b" style="left:94px;top:285px;" width="12" height="16" viewBox="0 0 12 16"><path d="M0 0h8l4 4.500v11.500H0z" fill="#f3e9f0"/><path d="M8 0v4.500h4z" fill="#e3d6e3"/><path d="M8 4.300h4" stroke="#e0cfe4" stroke-width=".7"/><rect x="2" y="6.900" width="8" height="2.200" fill="#eadfe9"/><path d="M2 6.500h8" stroke="#d4c6d6" stroke-width="1"/><path d="M2 9.400h8" stroke="#dccfde" stroke-width="1"/><path d="M2 11.500h5" stroke="#d4c6d6" stroke-width=".9"/></svg><div class="t" style="left:162.40px;top:289.00px;font-size:12px;color:#181d1f;letter-spacing:-0.330px;">1000673</div><div class="t" style="left:362.30px;top:289.00px;font-size:12px;color:#181d1f;letter-spacing:0.133px;">testing</div><div class="t" style="left:462.40px;top:289.00px;font-size:12px;color:#181d1f;letter-spacing:-0.330px;">1000309</div><div class="t" style="left:562.40px;top:289.00px;font-size:12px;color:#181d1f;letter-spacing:-0.330px;">1000290</div><div class="t" style="left:662.30px;top:289.00px;font-size:12px;color:#181d1f;letter-spacing:-0.420px;transform-origin:0 50%;transform:scaleX(0.9696);">FINAL</div><div class="t" style="left:762.20px;top:289.00px;font-size:12px;color:#181d1f;letter-spacing:-0.420px;transform-origin:0 50%;transform:scaleX(0.9704);">ACTIVE</div><div class="b" style="left:0px;top:308px;width:771px;height:28px;background:#fcfdfe;border-bottom:1px solid #dadee4;box-sizing:border-box;"></div><div class="b" style="left:12px;top:314px;width:16px;height:16px;background:#fff;border:1px solid #7f8c8d;border-radius:3px;box-sizing:border-box;"></div><svg class="b" style="left:94px;top:313px;" width="12" height="16" viewBox="0 0 12 16"><path d="M0 0h8l4 4.500v11.500H0z" fill="#e7def1"/><path d="M8 0v4.500h4z" fill="#d3c8df"/><path d="M8 4.300h4" stroke="#c9b6e0" stroke-width=".7"/><rect x="2" y="6.900" width="8" height="2.200" fill="#d9d0e4"/><path d="M2 6.500h8" stroke="#b3a6c0" stroke-width="1"/><path d="M2 9.400h8" stroke="#c3b7cf" stroke-width="1"/><path d="M2 11.500h5" stroke="#b3a6c0" stroke-width=".9"/></svg><div class="t" style="left:162.40px;top:317.00px;font-size:12px;color:#181d1f;letter-spacing:-0.330px;">1000668</div><div class="t" style="left:462.40px;top:317.00px;font-size:12px;color:#181d1f;letter-spacing:-0.330px;">1000306</div><div class="t" style="left:562.40px;top:317.00px;font-size:12px;color:#181d1f;letter-spacing:-0.330px;">1000287</div><div class="t" style="left:662.30px;top:317.00px;font-size:12px;color:#181d1f;letter-spacing:-0.420px;transform-origin:0 50%;transform:scaleX(0.9696);">FINAL</div><div class="t" style="left:762.20px;top:317.00px;font-size:12px;color:#181d1f;letter-spacing:-0.420px;transform-origin:0 50%;transform:scaleX(0.9704);">ACTIVE</div><div class="b" style="left:0px;top:336px;width:771px;height:28px;background:#ff4500;border-bottom:1px solid #f1e0da;box-sizing:border-box;"></div><div class="b" style="left:12px;top:342px;width:16px;height:16px;background:#fff;border:1px solid #7f8c8d;border-radius:3px;box-sizing:border-box;"></div><svg class="b" style="left:94px;top:341px;" width="12" height="16" viewBox="0 0 12 16"><path d="M0 0h8l4 4.500v11.500H0z" fill="#f3e9f0"/><path d="M8 0v4.500h4z" fill="#e3d6e3"/><path d="M8 4.300h4" stroke="#e0cfe4" stroke-width=".7"/><rect x="2" y="6.900" width="8" height="2.200" fill="#eadfe9"/><path d="M2 6.500h8" stroke="#d4c6d6" stroke-width="1"/><path d="M2 9.400h8" stroke="#dccfde" stroke-width="1"/><path d="M2 11.500h5" stroke="#d4c6d6" stroke-width=".9"/></svg><div class="t" style="left:162.40px;top:345.00px;font-size:12px;color:#181d1f;letter-spacing:-0.330px;">1000669</div><div class="t" style="left:462.40px;top:345.00px;font-size:12px;color:#181d1f;letter-spacing:-0.330px;">1000307</div><div class="t" style="left:562.40px;top:345.00px;font-size:12px;color:#181d1f;letter-spacing:-0.330px;">1000288</div><div class="t" style="left:662.30px;top:345.00px;font-size:12px;color:#181d1f;letter-spacing:-0.420px;transform-origin:0 50%;transform:scaleX(0.9696);">FINAL</div><div class="t" style="left:762.20px;top:345.00px;font-size:12px;color:#181d1f;letter-spacing:-0.420px;transform-origin:0 50%;transform:scaleX(0.9704);">ACTIVE</div><div class="b" style="left:0px;top:364px;width:771px;height:28px;background:#fcfdfe;border-bottom:1px solid #dadee4;box-sizing:border-box;"></div><div class="b" style="left:12px;top:370px;width:16px;height:16px;background:#fff;border:1px solid #7f8c8d;border-radius:3px;box-sizing:border-box;"></div><svg class="b" style="left:94px;top:369px;" width="12" height="16" viewBox="0 0 12 16"><path d="M0 0h8l4 4.500v11.500H0z" fill="#e7def1"/><path d="M8 0v4.500h4z" fill="#d3c8df"/><path d="M8 4.300h4" stroke="#c9b6e0" stroke-width=".7"/><rect x="2" y="6.900" width="8" height="2.200" fill="#d9d0e4"/><path d="M2 6.500h8" stroke="#b3a6c0" stroke-width="1"/><path d="M2 9.400h8" stroke="#c3b7cf" stroke-width="1"/><path d="M2 11.500h5" stroke="#b3a6c0" stroke-width=".9"/></svg><div class="t" style="left:162.40px;top:373.00px;font-size:12px;color:#181d1f;letter-spacing:-0.330px;">1000667</div><div class="t" style="left:462.40px;top:373.00px;font-size:12px;color:#181d1f;letter-spacing:-0.330px;">1000305</div><div class="t" style="left:562.40px;top:373.00px;font-size:12px;color:#181d1f;letter-spacing:-0.330px;">1000286</div><div class="t" style="left:662.30px;top:373.00px;font-size:12px;color:#181d1f;letter-spacing:-0.420px;transform-origin:0 50%;transform:scaleX(0.9696);">FINAL</div><div class="t" style="left:762.20px;top:373.00px;font-size:12px;color:#181d1f;letter-spacing:-0.420px;transform-origin:0 50%;transform:scaleX(0.9704);">ACTIVE</div><div class="b" style="left:0px;top:392px;width:771px;height:28px;background:#b9e3fd;border-bottom:1px solid #cfe6f5;box-sizing:border-box;"></div><div class="b" style="left:12px;top:398px;width:16px;height:16px;background:#fff;border:1px solid #2196f3;border-radius:3px;box-sizing:border-box;"><svg width="14" height="14" viewBox="0 0 14 14" style="position:absolute;left:0;top:0"><path d="M2.800 7.300l2.800 2.700 5.600-6" fill="none" stroke="#2196f3" stroke-width="1.300"/></svg></div><svg class="b" style="left:94px;top:397px;" width="12" height="16" viewBox="0 0 12 16"><path d="M0 0h8l4 4.500v11.500H0z" fill="#e7def1"/><path d="M8 0v4.500h4z" fill="#d3c8df"/><path d="M8 4.300h4" stroke="#c9b6e0" stroke-width=".7"/><rect x="2" y="6.900" width="8" height="2.200" fill="#d9d0e4"/><path d="M2 6.500h8" stroke="#b3a6c0" stroke-width="1"/><path d="M2 9.400h8" stroke="#c3b7cf" stroke-width="1"/><path d="M2 11.500h5" stroke="#b3a6c0" stroke-width=".9"/></svg><div class="t" style="left:162.40px;top:401.00px;font-size:12px;color:#181d1f;letter-spacing:-0.330px;">1000666</div><div class="t" style="left:462.40px;top:401.00px;font-size:12px;color:#181d1f;letter-spacing:-0.330px;">1000304</div><div class="t" style="left:562.40px;top:401.00px;font-size:12px;color:#181d1f;letter-spacing:-0.330px;">1000285</div><div class="t" style="left:662.30px;top:401.00px;font-size:12px;color:#181d1f;letter-spacing:-0.420px;transform-origin:0 50%;transform:scaleX(0.9696);">FINAL</div><div class="t" style="left:762.20px;top:401.00px;font-size:12px;color:#181d1f;letter-spacing:-0.420px;transform-origin:0 50%;transform:scaleX(0.9704);">ACTIVE</div><div class="b" style="left:0px;top:420px;width:771px;height:28px;background:#fcfdfe;border-bottom:1px solid #dadee4;box-sizing:border-box;"></div><div class="b" style="left:12px;top:426px;width:16px;height:16px;background:#fff;border:1px solid #7f8c8d;border-radius:3px;box-sizing:border-box;"></div><svg class="b" style="left:94px;top:425px;" width="12" height="16" viewBox="0 0 12 16"><path d="M0 0h8l4 4.500v11.500H0z" fill="#e7def1"/><path d="M8 0v4.500h4z" fill="#d3c8df"/><path d="M8 4.300h4" stroke="#c9b6e0" stroke-width=".7"/><rect x="2" y="6.900" width="8" height="2.200" fill="#d9d0e4"/><path d="M2 6.500h8" stroke="#b3a6c0" stroke-width="1"/><path d="M2 9.400h8" stroke="#c3b7cf" stroke-width="1"/><path d="M2 11.500h5" stroke="#b3a6c0" stroke-width=".9"/></svg><div class="t" style="left:162.40px;top:429.00px;font-size:12px;color:#181d1f;letter-spacing:-0.330px;">1000665</div><div class="t" style="left:462.40px;top:429.00px;font-size:12px;color:#181d1f;letter-spacing:-0.330px;">1000303</div><div class="t" style="left:562.40px;top:429.00px;font-size:12px;color:#181d1f;letter-spacing:-0.330px;">1000284</div><div class="t" style="left:662.30px;top:429.00px;font-size:12px;color:#181d1f;letter-spacing:-0.420px;transform-origin:0 50%;transform:scaleX(0.9696);">FINAL</div><div class="t" style="left:762.20px;top:429.00px;font-size:12px;color:#181d1f;letter-spacing:-0.420px;transform-origin:0 50%;transform:scaleX(0.9704);">ACTIVE</div><div class="b" style="left:0px;top:448px;width:771px;height:28px;background:#fff;border-bottom:1px solid #dadee4;box-sizing:border-box;"></div><div class="b" style="left:12px;top:454px;width:16px;height:16px;background:#fff;border:1px solid #7f8c8d;border-radius:3px;box-sizing:border-box;"></div><svg class="b" style="left:94px;top:453px;" width="12" height="16" viewBox="0 0 12 16"><path d="M0 0h8l4 4.500v11.500H0z" fill="#e7def1"/><path d="M8 0v4.500h4z" fill="#d3c8df"/><path d="M8 4.300h4" stroke="#c9b6e0" stroke-width=".7"/><rect x="2" y="6.900" width="8" height="2.200" fill="#d9d0e4"/><path d="M2 6.500h8" stroke="#b3a6c0" stroke-width="1"/><path d="M2 9.400h8" stroke="#c3b7cf" stroke-width="1"/><path d="M2 11.500h5" stroke="#b3a6c0" stroke-width=".9"/></svg><div class="t" style="left:162.40px;top:457.00px;font-size:12px;color:#181d1f;letter-spacing:-0.330px;">1000664</div><div class="t" style="left:462.40px;top:457.00px;font-size:12px;color:#181d1f;letter-spacing:-0.330px;">1000302</div><div class="t" style="left:562.40px;top:457.00px;font-size:12px;color:#181d1f;letter-spacing:-0.330px;">1000283</div><div class="t" style="left:662.30px;top:457.00px;font-size:12px;color:#181d1f;letter-spacing:-0.420px;transform-origin:0 50%;transform:scaleX(0.9696);">FINAL</div><div class="t" style="left:762.20px;top:457.00px;font-size:12px;color:#181d1f;letter-spacing:-0.420px;transform-origin:0 50%;transform:scaleX(0.9704);">ACTIVE</div><div class="b" style="left:0px;top:476px;width:771px;height:28px;background:#fcfdfe;border-bottom:1px solid #dadee4;box-sizing:border-box;"></div><div class="b" style="left:12px;top:482px;width:16px;height:16px;background:#fff;border:1px solid #7f8c8d;border-radius:3px;box-sizing:border-box;"></div><svg class="b" style="left:94px;top:481px;" width="12" height="16" viewBox="0 0 12 16"><path d="M0 0h8l4 4.500v11.500H0z" fill="#e7def1"/><path d="M8 0v4.500h4z" fill="#d3c8df"/><path d="M8 4.300h4" stroke="#c9b6e0" stroke-width=".7"/><rect x="2" y="6.900" width="8" height="2.200" fill="#d9d0e4"/><path d="M2 6.500h8" stroke="#b3a6c0" stroke-width="1"/><path d="M2 9.400h8" stroke="#c3b7cf" stroke-width="1"/><path d="M2 11.500h5" stroke="#b3a6c0" stroke-width=".9"/></svg><div class="t" style="left:162.40px;top:485.00px;font-size:12px;color:#181d1f;letter-spacing:-0.330px;">1000663</div><div class="t" style="left:462.40px;top:485.00px;font-size:12px;color:#181d1f;letter-spacing:-0.330px;">1000301</div><div class="t" style="left:562.40px;top:485.00px;font-size:12px;color:#181d1f;letter-spacing:-0.330px;">1000282</div><div class="t" style="left:662.30px;top:485.00px;font-size:12px;color:#181d1f;letter-spacing:-0.420px;transform-origin:0 50%;transform:scaleX(0.9696);">FINAL</div><div class="t" style="left:762.20px;top:485.00px;font-size:12px;color:#181d1f;letter-spacing:-0.420px;transform-origin:0 50%;transform:scaleX(0.9704);">ACTIVE</div><div class="b" style="left:0px;top:504px;width:771px;height:28px;background:#fff;border-bottom:1px solid #dadee4;box-sizing:border-box;"></div><div class="b" style="left:12px;top:510px;width:16px;height:16px;background:#fff;border:1px solid #7f8c8d;border-radius:3px;box-sizing:border-box;"></div><svg class="b" style="left:94px;top:509px;" width="12" height="16" viewBox="0 0 12 16"><path d="M0 0h8l4 4.500v11.500H0z" fill="#e7def1"/><path d="M8 0v4.500h4z" fill="#d3c8df"/><path d="M8 4.300h4" stroke="#c9b6e0" stroke-width=".7"/><rect x="2" y="6.900" width="8" height="2.200" fill="#d9d0e4"/><path d="M2 6.500h8" stroke="#b3a6c0" stroke-width="1"/><path d="M2 9.400h8" stroke="#c3b7cf" stroke-width="1"/><path d="M2 11.500h5" stroke="#b3a6c0" stroke-width=".9"/></svg><div class="t" style="left:162.40px;top:513.00px;font-size:12px;color:#181d1f;letter-spacing:-0.330px;">1000662</div><div class="t" style="left:462.40px;top:513.00px;font-size:12px;color:#181d1f;letter-spacing:-0.330px;">1000300</div><div class="t" style="left:562.40px;top:513.00px;font-size:12px;color:#181d1f;letter-spacing:-0.330px;">1000281</div><div class="t" style="left:662.30px;top:513.00px;font-size:12px;color:#181d1f;letter-spacing:-0.420px;transform-origin:0 50%;transform:scaleX(0.9696);">FINAL</div><div class="t" style="left:762.20px;top:513.00px;font-size:12px;color:#181d1f;letter-spacing:-0.420px;transform-origin:0 50%;transform:scaleX(0.9704);">ACTIVE</div></div>
<div class="b" style="left:1031px;top:336px;width:15px;height:523px;background:#fafafa;"></div>
<svg class="b" style="left:1033.8px;top:341.2px;" width="9.2" height="6.6" viewBox="0 0 10 7"><path d="M5 0l5 7H0z" fill="#8a8a8a"/></svg>
<div class="b" style="left:1034px;top:354px;width:9px;height:182px;background:#8c8c8c;border-radius:4.500px;"></div>
<svg class="b" style="left:1033.8px;top:848.2px;" width="9.2" height="6.6" viewBox="0 0 10 7"><path d="M0 0h10L5 7z" fill="#8a8a8a"/></svg>
<div class="b" style="left:260px;top:859px;width:771px;height:15px;background:#fbfbfb;"></div>
<svg class="b" style="left:264.5px;top:862px;" width="6.8" height="9" viewBox="0 0 7 9"><path d="M7 0v9L0 4.500z" fill="#8a8a8a"/></svg>
<div class="b" style="left:278px;top:862px;width:155px;height:9px;background:#8c8c8c;border-radius:4.500px;"></div>
<svg class="b" style="left:1019.8px;top:862px;" width="6.8" height="9" viewBox="0 0 7 9"><path d="M0 0l7 4.500L0 9z" fill="#8a8a8a"/></svg>
<div class="b" style="left:1046px;top:271px;width:1px;height:603px;background:#babfc7;"></div>
<div class="b" style="left:1047px;top:271px;width:20px;height:603px;background:#fff;"></div>
<div class="b" style="left:1047px;top:287px;width:20px;height:1px;background:#babfc7;"></div>
<div class="b" style="left:1047px;top:369px;width:20px;height:1px;background:#babfc7;"></div>
<div class="b" style="left:1047px;top:442px;width:20px;height:1px;background:#babfc7;"></div>
<svg class="b" style="left:1051px;top:299.3px;" width="11.2" height="9.2" viewBox="0 0 11.200 9.200"><path d="M.8 0v9.200M3.950 0v9.200M7.100 0v9.200M10.250 0v9.200" stroke="#3a3a4a" stroke-width="1.300"/></svg>
<div class="b" style="left:1051.6px;top:315.6px;width:0;height:0;transform-origin:0 0;transform:rotate(90deg);"><div class="t" style="left:0.00px;top:-11.00px;font-size:13.5px;color:#222;letter-spacing:-0.473px;transform-origin:0 50%;transform:scaleX(0.8774);">Columns</div></div>
<svg class="b" style="left:1050.8px;top:384px;" width="11.5" height="10" viewBox="0 0 11.500 10"><path d="M.8 .8h9.900L6.500 5.300v4L5 8V5.300z" fill="none" stroke="#333" stroke-width="1.200" stroke-linejoin="round"/></svg>
<div class="b" style="left:1051.6px;top:400.8px;width:0;height:0;transform-origin:0 0;transform:rotate(90deg);"><div class="t" style="left:0.00px;top:-11.00px;font-size:13.5px;color:#222;letter-spacing:-0.473px;transform-origin:0 50%;transform:scaleX(0.8617);">Filters</div></div>
<div class="b" style="left:1070px;top:61px;width:2px;height:880px;background:#cfcfcf;"></div>
<div class="b" style="left:1884px;top:61px;width:1px;height:880px;background:#d9d9d9;"></div>
<div class="b" style="left:1080px;top:63px;width:40px;height:40px;background:linear-gradient(to bottom,#0fdcbc 0%,#22cfc8 14%,#41b0d5 36%,#6f86e0 62%,#b231ea 100%);border-radius:50%;box-shadow:0 2px 3px rgba(0,0,0,.28);"></div>
<svg class="b" style="left:1080px;top:63px;" width="40" height="40" viewBox="0 0 40 40"><path d="M29.300 5.800c3.600 2.600 6 6 7.200 10" fill="none" stroke="rgba(130,245,245,.75)" stroke-width="1"/></svg>
<svg class="b" style="left:1086.7px;top:69.4px;" width="26.8" height="26.8" viewBox="0 0 24 24"><path fill="#f3f3f8" d="M10 9V5l-7 7 7 7v-4.100c5 0 8.500 1.600 11 5.100-1-5-4-10-11-11z"/></svg>
<div class="t" style="left:1126.20px;top:76.00px;font-size:13.8px;color:#111;letter-spacing:0.570px;text-shadow:0 0 .3px #111;">Edit Internal Payment Voucher</div>
<div class="b" style="left:1732px;top:68px;width:77px;height:36px;background:#1e88e5;border-radius:4px;box-shadow:0 2px 3px rgba(0,0,0,.25),0 1px 5px rgba(0,0,0,.12);"></div>
<div class="t" style="left:1748.20px;top:79.00px;font-size:14.4px;color:#fff;font-weight:700;letter-spacing:-0.504px;transform-origin:0 50%;transform:scaleX(0.9259);">CLONE</div>
<div class="b" style="left:1815px;top:68px;width:68px;height:36px;background:#1e88e5;border-radius:4px;box-shadow:0 2px 3px rgba(0,0,0,.25),0 1px 5px rgba(0,0,0,.12);"></div>
<div class="t" style="left:1831.70px;top:79.00px;font-size:14.4px;color:#fff;font-weight:700;letter-spacing:-0.504px;transform-origin:0 50%;transform:scaleX(0.9550);">SAVE</div>
<svg class="b" style="left:1088px;top:147.5px;" width="9" height="12" viewBox="0 0 9 12"><path d="M7.300 1.200L2 6l5.300 4.800" fill="none" stroke="#9a9a9a" stroke-width="1.700"/></svg>
<div class="t" style="left:1149.60px;top:146.00px;font-size:14.6px;color:#858585;letter-spacing:0.364px;">Main Details</div>
<div class="t" style="left:1324.00px;top:146.00px;font-size:14.6px;color:#858585;letter-spacing:-0.013px;">Expenses</div>
<div class="t" style="left:1491.60px;top:146.00px;font-size:14.6px;color:#858585;letter-spacing:0.858px;">Account</div>
<div class="t" style="left:1653.70px;top:146.00px;font-size:14.6px;color:#858585;letter-spacing:0.772px;">Payment</div>
<div class="b" style="left:1820px;top:135px;width:26px;height:40px;overflow:hidden;"><div class="t" style="left:12.60px;top:11.00px;font-size:14.6px;color:#858585;letter-spacing:0.300px;">AR/AP</div></div>
<div class="b" style="left:1074px;top:177px;width:808px;height:1px;background:#e0e0e0;"></div>
<div class="b" style="left:1840px;top:128px;width:6px;height:49px;background:linear-gradient(to right,rgba(0,0,0,0),rgba(0,0,0,.10));"></div>
<div class="b" style="left:1846px;top:128px;width:36px;height:49px;background:#fff;"></div>
<svg class="b" style="left:1860px;top:147.5px;" width="9" height="12" viewBox="0 0 9 12"><path d="M1.700 1.200L7 6l-5.300 4.800" fill="none" stroke="#222" stroke-width="1.700"/></svg>
<div class="t" style="left:1112.50px;top:195.00px;font-size:14.6px;color:#858585;letter-spacing:0.493px;">Journal Txn</div>
<div class="t" style="left:1263.00px;top:195.00px;font-size:14.6px;color:#858585;letter-spacing:0.557px;">Cashbook Txn</div>
<div class="t" style="left:1438.00px;top:195.00px;font-size:14.6px;color:#858585;letter-spacing:0.137px;">Points Txn</div>
<div class="t" style="left:1607.00px;top:195.00px;font-size:14.6px;color:#858585;letter-spacing:0.199px;">Tax Txn</div>
<div class="t" style="left:1769.00px;top:195.00px;font-size:14.6px;color:#222;letter-spacing:0.234px;">Inv Txn</div>
<div class="b" style="left:1074px;top:226px;width:808px;height:1px;background:#e0e0e0;"></div>
<div class="b" style="left:1714px;top:224px;width:160px;height:2px;background:linear-gradient(to right,#1e88e5,#4a7ce9 60%,#7b68ee);"></div>
<div class="b" style="left:1074px;top:227px;width:808px;height:52px;background:linear-gradient(to right,#fff 0,#fbfbfb 8%,#f8f8f8 100%);"></div>
<div class="t" style="left:1654.20px;top:236.00px;font-size:10.3px;color:#9a9a9a;letter-spacing:-0.361px;transform-origin:0 50%;transform:scaleX(0.9972);">Rows</div>
<div class="t" style="left:1654.20px;top:252.00px;font-size:13.4px;color:#333;letter-spacing:-0.469px;transform-origin:0 50%;transform:scaleX(0.7636);">10</div>
<svg class="b" style="left:1698px;top:258.2px;" width="10" height="5" viewBox="0 0 10 5"><path d="M0 0h10L5 5z" fill="#757575"/></svg>
<div class="b" style="left:1654px;top:271.5px;width:58px;height:1px;background:#8e8e8e;"></div>
<svg class="b" style="left:1717px;top:258px;" width="14" height="12" viewBox="0 0 14 12"><path d="M1.400 0v12" stroke="#bdbdbd" stroke-width="1.500"/><path d="M12.300 .8L6.300 6l6 5.200" fill="none" stroke="#bdbdbd" stroke-width="1.500"/></svg>
<svg class="b" style="left:1741px;top:258px;" width="9" height="12" viewBox="0 0 9 12"><path d="M7.800 .8L1.800 6l6 5.200" fill="none" stroke="#bdbdbd" stroke-width="1.500"/></svg>
<div class="t" style="left:1756.40px;top:257.00px;font-size:14.4px;color:#222;letter-spacing:-0.504px;transform-origin:0 50%;transform:scaleX(0.9787);">Page</div>
<div class="t" style="left:1793.20px;top:257.00px;font-size:14.4px;color:#222;font-weight:700;">1</div>
<div class="t" style="left:1805.50px;top:257.00px;font-size:14.4px;color:#222;letter-spacing:-0.504px;transform-origin:0 50%;transform:scaleX(0.9748);">of</div>
<div class="t" style="left:1825.20px;top:257.00px;font-size:14.4px;color:#222;font-weight:700;letter-spacing:-0.504px;transform-origin:0 50%;transform:scaleX(0.7752);">10</div>
<svg class="b" style="left:1845.5px;top:258px;" width="9" height="12" viewBox="0 0 9 12"><path d="M1.200 .8l6 5.200-6 5.200" fill="none" stroke="#222" stroke-width="1.700"/></svg>
<svg class="b" style="left:1864.5px;top:258px;" width="14" height="12" viewBox="0 0 14 12"><path d="M1.200 .8l6 5.200-6 5.200" fill="none" stroke="#222" stroke-width="1.700"/><path d="M12.500 0v12" stroke="#222" stroke-width="1.700"/></svg>
<div class="b" style="left:1074px;top:279px;width:808px;height:680px;background:#fff;border:1px solid #babfc7;box-sizing:border-box;"></div>
<div class="b" style="left:1075px;top:280px;width:785px;height:32px;background:#d3d3d3;border-bottom:1px solid #babfc7;"></div>
<div class="b" style="left:1075px;top:313px;width:785px;height:31px;background:#d3d3d3;border-bottom:1px solid #babfc7;"></div>
<div class="t" style="left:1086.70px;top:291.00px;font-size:12px;color:#6a676d;text-shadow:.45px 0 0 #6a676d;">Item Code</div>
<div class="b" style="left:1087px;top:320px;width:107px;height:18px;background:#fff;border:1px solid #95a5a6;box-sizing:border-box;"></div>
<div class="b" style="left:1206px;top:288px;width:1px;height:16px;background:#c6c9cb;"></div>
<div class="b" style="left:1206px;top:321px;width:1px;height:16px;background:#c6c9cb;"></div>
<div class="t" style="left:1217.70px;top:291.00px;font-size:12px;color:#6a676d;letter-spacing:0.228px;text-shadow:.45px 0 0 #6a676d;">Item Name</div>
<div class="b" style="left:1218px;top:320px;width:107px;height:18px;background:#fff;border:1px solid #95a5a6;box-sizing:border-box;"></div>
<div class="b" style="left:1336px;top:288px;width:1px;height:16px;background:#c6c9cb;"></div>
<div class="b" style="left:1336px;top:321px;width:1px;height:16px;background:#c6c9cb;"></div>
<div class="t" style="left:1348.70px;top:291.00px;font-size:12px;color:#6a676d;letter-spacing:0.250px;text-shadow:.45px 0 0 #6a676d;">Description</div>
<div class="b" style="left:1349px;top:320px;width:107px;height:18px;background:#fff;border:1px solid #95a5a6;box-sizing:border-box;"></div>
<div class="b" style="left:1468px;top:288px;width:1px;height:16px;background:#c6c9cb;"></div>
<div class="b" style="left:1468px;top:321px;width:1px;height:16px;background:#c6c9cb;"></div>
<div class="t" style="left:1479.70px;top:291.00px;font-size:12px;color:#6a676d;letter-spacing:-0.189px;text-shadow:.45px 0 0 #6a676d;">Txn Date</div>
<div class="b" style="left:1480px;top:320px;width:107px;height:18px;background:#fff;border:1px solid #95a5a6;box-sizing:border-box;"></div>
<div class="b" style="left:1598px;top:288px;width:1px;height:16px;background:#c6c9cb;"></div>
<div class="b" style="left:1598px;top:321px;width:1px;height:16px;background:#c6c9cb;"></div>
<div class="t" style="left:1653.10px;top:291.00px;font-size:12px;color:#6a676d;letter-spacing:0.107px;text-shadow:.45px 0 0 #6a676d;">Qty Signum</div>
<div class="b" style="left:1611px;top:320px;width:107px;height:18px;background:#fff;border:1px solid #95a5a6;box-sizing:border-box;"></div>
<div class="b" style="left:1730px;top:288px;width:1px;height:16px;background:#c6c9cb;"></div>
<div class="b" style="left:1730px;top:321px;width:1px;height:16px;background:#c6c9cb;"></div>
<div class="t" style="left:1800.50px;top:291.00px;font-size:12px;color:#6a676d;letter-spacing:-0.303px;text-shadow:.45px 0 0 #6a676d;">Qty Base</div>
<div class="b" style="left:1742px;top:320px;width:107px;height:18px;background:#fff;border:1px solid #95a5a6;box-sizing:border-box;"></div>
<div class="b" style="left:1075px;top:345px;width:785px;height:28px;background:#fff;border-bottom:1px solid #dde2eb;box-sizing:border-box;"></div>
<div class="t" style="left:1086.90px;top:354.00px;font-size:12px;color:#181d1f;letter-spacing:-0.274px;">9557892107313AA</div>
<div class="t" style="left:1479.70px;top:354.00px;font-size:12px;color:#181d1f;letter-spacing:-0.080px;">2023-04-01</div>
<div class="t" style="left:1710.08px;top:354.00px;font-size:12px;color:#181d1f;letter-spacing:-0.300px;">1</div>
<div class="t" style="left:1840.88px;top:354.00px;font-size:12px;color:#181d1f;letter-spacing:-0.300px;">1</div>
<div class="b" style="left:1075px;top:373px;width:785px;height:28px;background:#f4f4f4;border-bottom:1px solid #dde2eb;box-sizing:border-box;"></div>
<div class="t" style="left:1086.90px;top:382.00px;font-size:12px;color:#181d1f;letter-spacing:-0.420px;transform-origin:0 50%;transform:scaleX(0.9608);">MCSC006BKZ</div>
<div class="t" style="left:1217.80px;top:382.00px;font-size:12px;color:#181d1f;letter-spacing:-0.342px;">6 MM<span style="font-size:8.500px;position:relative;top:-4.300px;font-weight:700">2</span> CU/PVC BL...</div>
<div class="t" style="left:1479.70px;top:382.00px;font-size:12px;color:#181d1f;letter-spacing:-0.080px;">2023-06-19</div>
<div class="t" style="left:1706.42px;top:382.00px;font-size:12px;color:#181d1f;letter-spacing:-0.300px;">-1</div>
<div class="t" style="left:1840.88px;top:382.00px;font-size:12px;color:#181d1f;letter-spacing:-0.300px;">1</div>
<div class="b" style="left:1075px;top:401px;width:785px;height:28px;background:#fff;border-bottom:1px solid #dde2eb;box-sizing:border-box;"></div>
<div class="t" style="left:1086.90px;top:410.00px;font-size:12px;color:#181d1f;letter-spacing:-0.420px;transform-origin:0 50%;transform:scaleX(0.9608);">MCSC006BKZ</div>
<div class="t" style="left:1217.80px;top:410.00px;font-size:12px;color:#181d1f;letter-spacing:-0.342px;">6 MM<span style="font-size:8.500px;position:relative;top:-4.300px;font-weight:700">2</span> CU/PVC BL...</div>
<div class="t" style="left:1479.70px;top:410.00px;font-size:12px;color:#181d1f;letter-spacing:0.013px;">2024-11-01</div>
<div class="t" style="left:1706.42px;top:410.00px;font-size:12px;color:#181d1f;letter-spacing:-0.300px;">-1</div>
<div class="t" style="left:1840.88px;top:410.00px;font-size:12px;color:#181d1f;letter-spacing:-0.300px;">1</div>
<div class="b" style="left:1075px;top:429px;width:785px;height:28px;background:#f4f4f4;border-bottom:1px solid #dde2eb;box-sizing:border-box;"></div>
<div class="t" style="left:1086.90px;top:438.00px;font-size:12px;color:#181d1f;letter-spacing:-0.420px;transform-origin:0 50%;transform:scaleX(0.9572);">JP-001</div>
<div class="t" style="left:1217.80px;top:438.00px;font-size:12px;color:#181d1f;letter-spacing:-0.420px;transform-origin:0 50%;transform:scaleX(0.9572);">JP-001</div>
<div class="t" style="left:1479.70px;top:438.00px;font-size:12px;color:#181d1f;letter-spacing:-0.080px;">2024-12-28</div>
<div class="t" style="left:1710.08px;top:438.00px;font-size:12px;color:#181d1f;letter-spacing:-0.300px;">1</div>
<div class="t" style="left:1837.22px;top:438.00px;font-size:12px;color:#181d1f;letter-spacing:-0.300px;">-1</div>
<div class="b" style="left:1075px;top:457px;width:785px;height:28px;background:#fff;border-bottom:1px solid #dde2eb;box-sizing:border-box;"></div>
<div class="t" style="left:1086.90px;top:466.00px;font-size:12px;color:#181d1f;letter-spacing:-0.420px;transform-origin:0 50%;transform:scaleX(0.9102);">LAZADA_SELLER_...</div>
<div class="t" style="left:1479.70px;top:466.00px;font-size:12px;color:#181d1f;letter-spacing:-0.080px;">2023-01-01</div>
<div class="t" style="left:1710.08px;top:466.00px;font-size:12px;color:#181d1f;letter-spacing:-0.300px;">1</div>
<div class="t" style="left:1840.88px;top:466.00px;font-size:12px;color:#181d1f;letter-spacing:-0.300px;">1</div>
<div class="b" style="left:1075px;top:485px;width:785px;height:28px;background:#f4f4f4;border-bottom:1px solid #dde2eb;box-sizing:border-box;"></div>
<div class="t" style="left:1479.70px;top:494.00px;font-size:12px;color:#181d1f;letter-spacing:-0.080px;">2022-08-01</div>
<div class="t" style="left:1710.08px;top:494.00px;font-size:12px;color:#181d1f;letter-spacing:-0.300px;">1</div>
<div class="t" style="left:1837.22px;top:494.00px;font-size:12px;color:#181d1f;letter-spacing:-0.300px;">-1</div>
<div class="b" style="left:1075px;top:513px;width:785px;height:28px;background:#fff;border-bottom:1px solid #dde2eb;box-sizing:border-box;"></div>
<div class="t" style="left:1086.90px;top:522.00px;font-size:12px;color:#181d1f;letter-spacing:-0.420px;transform-origin:0 50%;transform:scaleX(0.9449);">HYPERBAR 100BT...</div>
<div class="t" style="left:1217.80px;top:522.00px;font-size:12px;color:#181d1f;letter-spacing:-0.420px;transform-origin:0 50%;transform:scaleX(0.9449);">HYPERBAR 100BT...</div>
<div class="t" style="left:1479.70px;top:522.00px;font-size:12px;color:#181d1f;letter-spacing:-0.080px;">2025-06-04</div>
<div class="t" style="left:1706.42px;top:522.00px;font-size:12px;color:#181d1f;letter-spacing:-0.300px;">-1</div>
<div class="t" style="left:1837.22px;top:522.00px;font-size:12px;color:#181d1f;letter-spacing:-0.300px;">-1</div>
<div class="b" style="left:1075px;top:541px;width:785px;height:28px;background:#f4f4f4;border-bottom:1px solid #dde2eb;box-sizing:border-box;"></div>
<div class="t" style="left:1086.90px;top:550.00px;font-size:12px;color:#181d1f;letter-spacing:-0.420px;transform-origin:0 50%;transform:scaleX(0.8653);">TESTCOST</div>
<div class="t" style="left:1217.80px;top:550.00px;font-size:12px;color:#181d1f;letter-spacing:-0.420px;transform-origin:0 50%;transform:scaleX(0.8653);">TESTCOST</div>
<div class="t" style="left:1479.70px;top:550.00px;font-size:12px;color:#181d1f;letter-spacing:-0.080px;">2025-01-27</div>
<div class="t" style="left:1706.42px;top:550.00px;font-size:12px;color:#181d1f;letter-spacing:-0.300px;">-1</div>
<div class="t" style="left:1840.88px;top:550.00px;font-size:12px;color:#181d1f;letter-spacing:-0.300px;">1</div>
<div class="b" style="left:1075px;top:569px;width:785px;height:28px;background:#fff;border-bottom:1px solid #dde2eb;box-sizing:border-box;"></div>
<div class="t" style="left:1086.90px;top:578.00px;font-size:12px;color:#181d1f;letter-spacing:-0.258px;">TMT-ITEM-001</div>
<div class="t" style="left:1217.80px;top:578.00px;font-size:12px;color:#181d1f;letter-spacing:-0.258px;">TMT-ITEM-001</div>
<div class="t" style="left:1479.70px;top:578.00px;font-size:12px;color:#181d1f;letter-spacing:-0.080px;">2025-03-29</div>
<div class="t" style="left:1706.42px;top:578.00px;font-size:12px;color:#181d1f;letter-spacing:-0.300px;">-1</div>
<div class="t" style="left:1840.88px;top:578.00px;font-size:12px;color:#181d1f;letter-spacing:-0.300px;">1</div>
<div class="b" style="left:1075px;top:597px;width:785px;height:28px;background:#f4f4f4;border-bottom:1px solid #dde2eb;box-sizing:border-box;"></div>
<div class="t" style="left:1086.90px;top:606.00px;font-size:12px;color:#181d1f;letter-spacing:-0.420px;transform-origin:0 50%;transform:scaleX(0.9506);">TEST-SB-19</div>
<div class="t" style="left:1479.70px;top:606.00px;font-size:12px;color:#181d1f;letter-spacing:-0.080px;">2023-06-01</div>
<div class="t" style="left:1710.08px;top:606.00px;font-size:12px;color:#181d1f;letter-spacing:-0.300px;">1</div>
<div class="t" style="left:1837.22px;top:606.00px;font-size:12px;color:#181d1f;letter-spacing:-0.300px;">-2</div>
<div class="b" style="left:1860px;top:280px;width:1px;height:639px;background:#babfc7;"></div>
<div class="b" style="left:1861px;top:280px;width:20px;height:639px;background:#fff;"></div>
<div class="b" style="left:1861px;top:296px;width:20px;height:1px;background:#babfc7;"></div>
<div class="b" style="left:1861px;top:379px;width:20px;height:1px;background:#babfc7;"></div>
<div class="b" style="left:1861px;top:451px;width:20px;height:1px;background:#babfc7;"></div>
<svg class="b" style="left:1865.7px;top:308.4px;" width="11.2" height="9.2" viewBox="0 0 11.200 9.200"><path d="M.8 0v9.200M3.950 0v9.200M7.100 0v9.200M10.250 0v9.200" stroke="#2a2a2a" stroke-width="1.300"/></svg>
<div class="b" style="left:1865.7px;top:324.5px;width:0;height:0;transform-origin:0 0;transform:rotate(90deg);"><div class="t" style="left:0.00px;top:-11.00px;font-size:13.5px;color:#222;letter-spacing:-0.473px;transform-origin:0 50%;transform:scaleX(0.8833);">Columns</div></div>
<svg class="b" style="left:1865.2px;top:394.2px;" width="11.5" height="10" viewBox="0 0 11.500 10"><path d="M.8 .8h9.900L6.500 5.300v4L5 8V5.300z" fill="none" stroke="#333" stroke-width="1.200" stroke-linejoin="round"/></svg>
<div class="b" style="left:1865.7px;top:411.3px;width:0;height:0;transform-origin:0 0;transform:rotate(90deg);"><div class="t" style="left:0.00px;top:-11.00px;font-size:13.5px;color:#222;letter-spacing:-0.473px;transform-origin:0 50%;transform:scaleX(0.8647);">Filters</div></div>
<div class="b" style="left:1075px;top:919px;width:806px;height:1px;background:#babfc7;"></div>
<div class="t" style="left:1094.70px;top:932.00px;font-size:12.2px;color:#8c8c8c;letter-spacing:-0.427px;transform-origin:0 50%;transform:scaleX(0.9470);">Rows:</div>
<div class="t" style="left:1129.70px;top:932.00px;font-size:12.2px;color:#111;font-weight:700;letter-spacing:-0.427px;transform-origin:0 50%;transform:scaleX(0.9016);">100</div>
<div class="b" style="left:0px;top:0px;width:1905px;height:60.6px;background:#011936;box-shadow:0 1px 3px rgba(0,0,0,.35),0 3px 7px rgba(0,0,0,.18);z-index:5;"></div>
<div class="b" style="left:0px;top:0px;width:1905px;height:60.6px;z-index:6;"><div class="b" style="left:20.6px;top:23.6px;width:18.8px;height:2px;background:#fff;"></div><div class="b" style="left:20.6px;top:28.6px;width:18.8px;height:2px;background:#fff;"></div><div class="b" style="left:20.6px;top:33.6px;width:18.8px;height:2px;background:#fff;"></div><svg class="b" style="left:70px;top:15px;" width="27" height="26" viewBox="70 15 27 26">
      <path d="M82.900 16.500 L83.300 31 L72 37.200 C70.900 37.300 70.500 36.300 71 35.400 L81.900 16.900 C82.200 16.400 82.700 16.300 82.900 16.500Z" fill="#d63b2b"/>
      <path d="M83.700 16.500 L83.500 31 L94.800 37.100 C95.900 37.200 96.300 36.200 95.800 35.300 L84.700 16.900 C84.400 16.400 83.900 16.300 83.700 16.500Z" fill="#09a05a"/>
      <path d="M83.400 31.300 L72.200 37.500 C71.700 38.300 72.200 39.300 73.200 39.300 L93.700 39.300 C94.700 39.300 95.200 38.300 94.700 37.500 Z" fill="#1a73e8"/>
    </svg><svg class="b" style="left:98px;top:16px;" width="84" height="24" viewBox="98 16 84 24"><g fill="none" stroke="#efefef" stroke-width="4.800">
      <ellipse cx="107.300" cy="29.700" rx="5.300" ry="5.600"/><path d="M113.350 21.700V37.700"/>
      <path d="M118.700 19L118.700 37.700"/>
      <ellipse cx="137.900" cy="29.700" rx="5.300" ry="5.600"/><path d="M144.800 21.700V37.700"/>
      <path d="M150.800 21.700V30.900A4.450 4.450 0 0 0 159.700 30.900V21.700M159.700 30V37.700"/>
      <path d="M165.900 37.700V21.700M165.900 28.600A4.850 4.850 0 0 1 175.600 28.600V37.700"/>
      </g>
      <path d="M116.300 21.200L121.100 17.700V21.200Z" fill="#efefef"/>
      <path d="M120.600 29.400L126.200 21.700H131.800L124.600 31.200Z" fill="#efefef"/>
      <path d="M120.800 30.200L124.800 27.500L132 37.700H126.300Z" fill="#efefef"/>
    </svg><svg class="b" style="left:1860px;top:10px;" width="40" height="40" viewBox="0 0 40 40"><defs><clipPath id="av"><circle cx="20" cy="20" r="20"/></clipPath>
      <linearGradient id="sea" x1="0" y1="0" x2="0" y2="1"><stop offset="0" stop-color="#b9d0d4"/><stop offset=".3" stop-color="#90b1b9"/><stop offset="1" stop-color="#659099"/></linearGradient>
      <linearGradient id="hair" x1="1" y1="0" x2="0" y2="1"><stop offset="0" stop-color="#3f2b1c"/><stop offset=".5" stop-color="#7a5533"/><stop offset="1" stop-color="#b48d62"/></linearGradient>
      <linearGradient id="sky" x1="0" y1="0" x2="0" y2="1"><stop offset="0" stop-color="#f6f5f0"/><stop offset="1" stop-color="#e6eae8"/></linearGradient></defs>
      <g clip-path="url(#av)">
      <rect y="12" width="40" height="28" fill="url(#sea)"/>
      <rect width="40" height="12.300" fill="url(#sky)"/>
      <path d="M1.300 12.500c1-1.100 2.200-1.400 3.300-.8 1.200-1.200 3.500-1.600 5.200-.2.700.2 1.200.5 1.300 1z" fill="#3c5647"/>
      <path d="M2 20q1.500 -.6 3 0" stroke="#4f808b" stroke-width=".5" fill="none" opacity=".55"/><path d="M7 23q1.500 -.6 3 0" stroke="#4f808b" stroke-width=".5" fill="none" opacity=".55"/><path d="M1 27q1.500 -.6 3 0" stroke="#4f808b" stroke-width=".5" fill="none" opacity=".55"/><path d="M5 31q1.500 -.6 3 0" stroke="#4f808b" stroke-width=".5" fill="none" opacity=".55"/><path d="M9 35q1.500 -.6 3 0" stroke="#4f808b" stroke-width=".5" fill="none" opacity=".55"/><path d="M3 36q1.500 -.6 3 0" stroke="#4f808b" stroke-width=".5" fill="none" opacity=".55"/><path d="M25 21q1.500 -.6 3 0" stroke="#4f808b" stroke-width=".5" fill="none" opacity=".55"/><path d="M30 24q1.500 -.6 3 0" stroke="#4f808b" stroke-width=".5" fill="none" opacity=".55"/><path d="M27 28q1.500 -.6 3 0" stroke="#4f808b" stroke-width=".5" fill="none" opacity=".55"/><path d="M33 31q1.500 -.6 3 0" stroke="#4f808b" stroke-width=".5" fill="none" opacity=".55"/><path d="M26 34q1.500 -.6 3 0" stroke="#4f808b" stroke-width=".5" fill="none" opacity=".55"/><path d="M31 36q1.500 -.6 3 0" stroke="#4f808b" stroke-width=".5" fill="none" opacity=".55"/><path d="M22 38q1.500 -.6 3 0" stroke="#4f808b" stroke-width=".5" fill="none" opacity=".55"/><path d="M12 38q1.500 -.6 3 0" stroke="#4f808b" stroke-width=".5" fill="none" opacity=".55"/><path d="M34 19q1.500 -.6 3 0" stroke="#4f808b" stroke-width=".5" fill="none" opacity=".55"/><path d="M29 17q1.500 -.6 3 0" stroke="#4f808b" stroke-width=".5" fill="none" opacity=".55"/><path d="M4 16q1.500 -.6 3 0" stroke="#4f808b" stroke-width=".5" fill="none" opacity=".55"/><path d="M9 18q1.500 -.6 3 0" stroke="#4f808b" stroke-width=".5" fill="none" opacity=".55"/><path d="M24 15q1.500 -.6 3 0" stroke="#4f808b" stroke-width=".5" fill="none" opacity=".55"/><path d="M33 14q1.500 -.6 3 0" stroke="#4f808b" stroke-width=".5" fill="none" opacity=".55"/>
      <path d="M14.300 37c-.7 3 .300 3.200.9 3.200h8c.900-2 0-9.500-1.300-12.500-1-2.200-3.400-3.500-5.500-2-1.500 3-1.600 8.300-2.100 11.300z" fill="#e9e5ed"/>
      <path d="M17.500 30l1.300 9M20 31l.8 8" stroke="#c9c3d2" stroke-width=".6" fill="none"/>
      <path d="M16.600 13.300c2.400-1.500 4.700-.2 4.400 2.500-.2 2.400-.8 5.200-1.300 8.200-.4 2.800-1.600 5.600-3.500 7.800-2.600-.5-3.800-3-4-6.300-.3-4.200 1.800-10.600 4.400-12.200z" fill="url(#hair)"/>
      <path d="M19.600 15.600c1 .2 1.500 1.400 1.500 2.900l-.5 3.500 1 .9-.6 8.600c-1 .4-1.400-1-1.500-2.500z" fill="#d8ad8b"/>
      <rect x="20.400" y="17.700" width="4.800" height="4.100" rx="1" fill="#1f2327"/>
      <path d="M20.800 22c1.400-.6 2.600-.2 2.900 1 .2 1.300-.8 3.200-1.300 5.500l-1.700-.3z" fill="#dcb496"/>
      </g></svg></div>
</body></html>
